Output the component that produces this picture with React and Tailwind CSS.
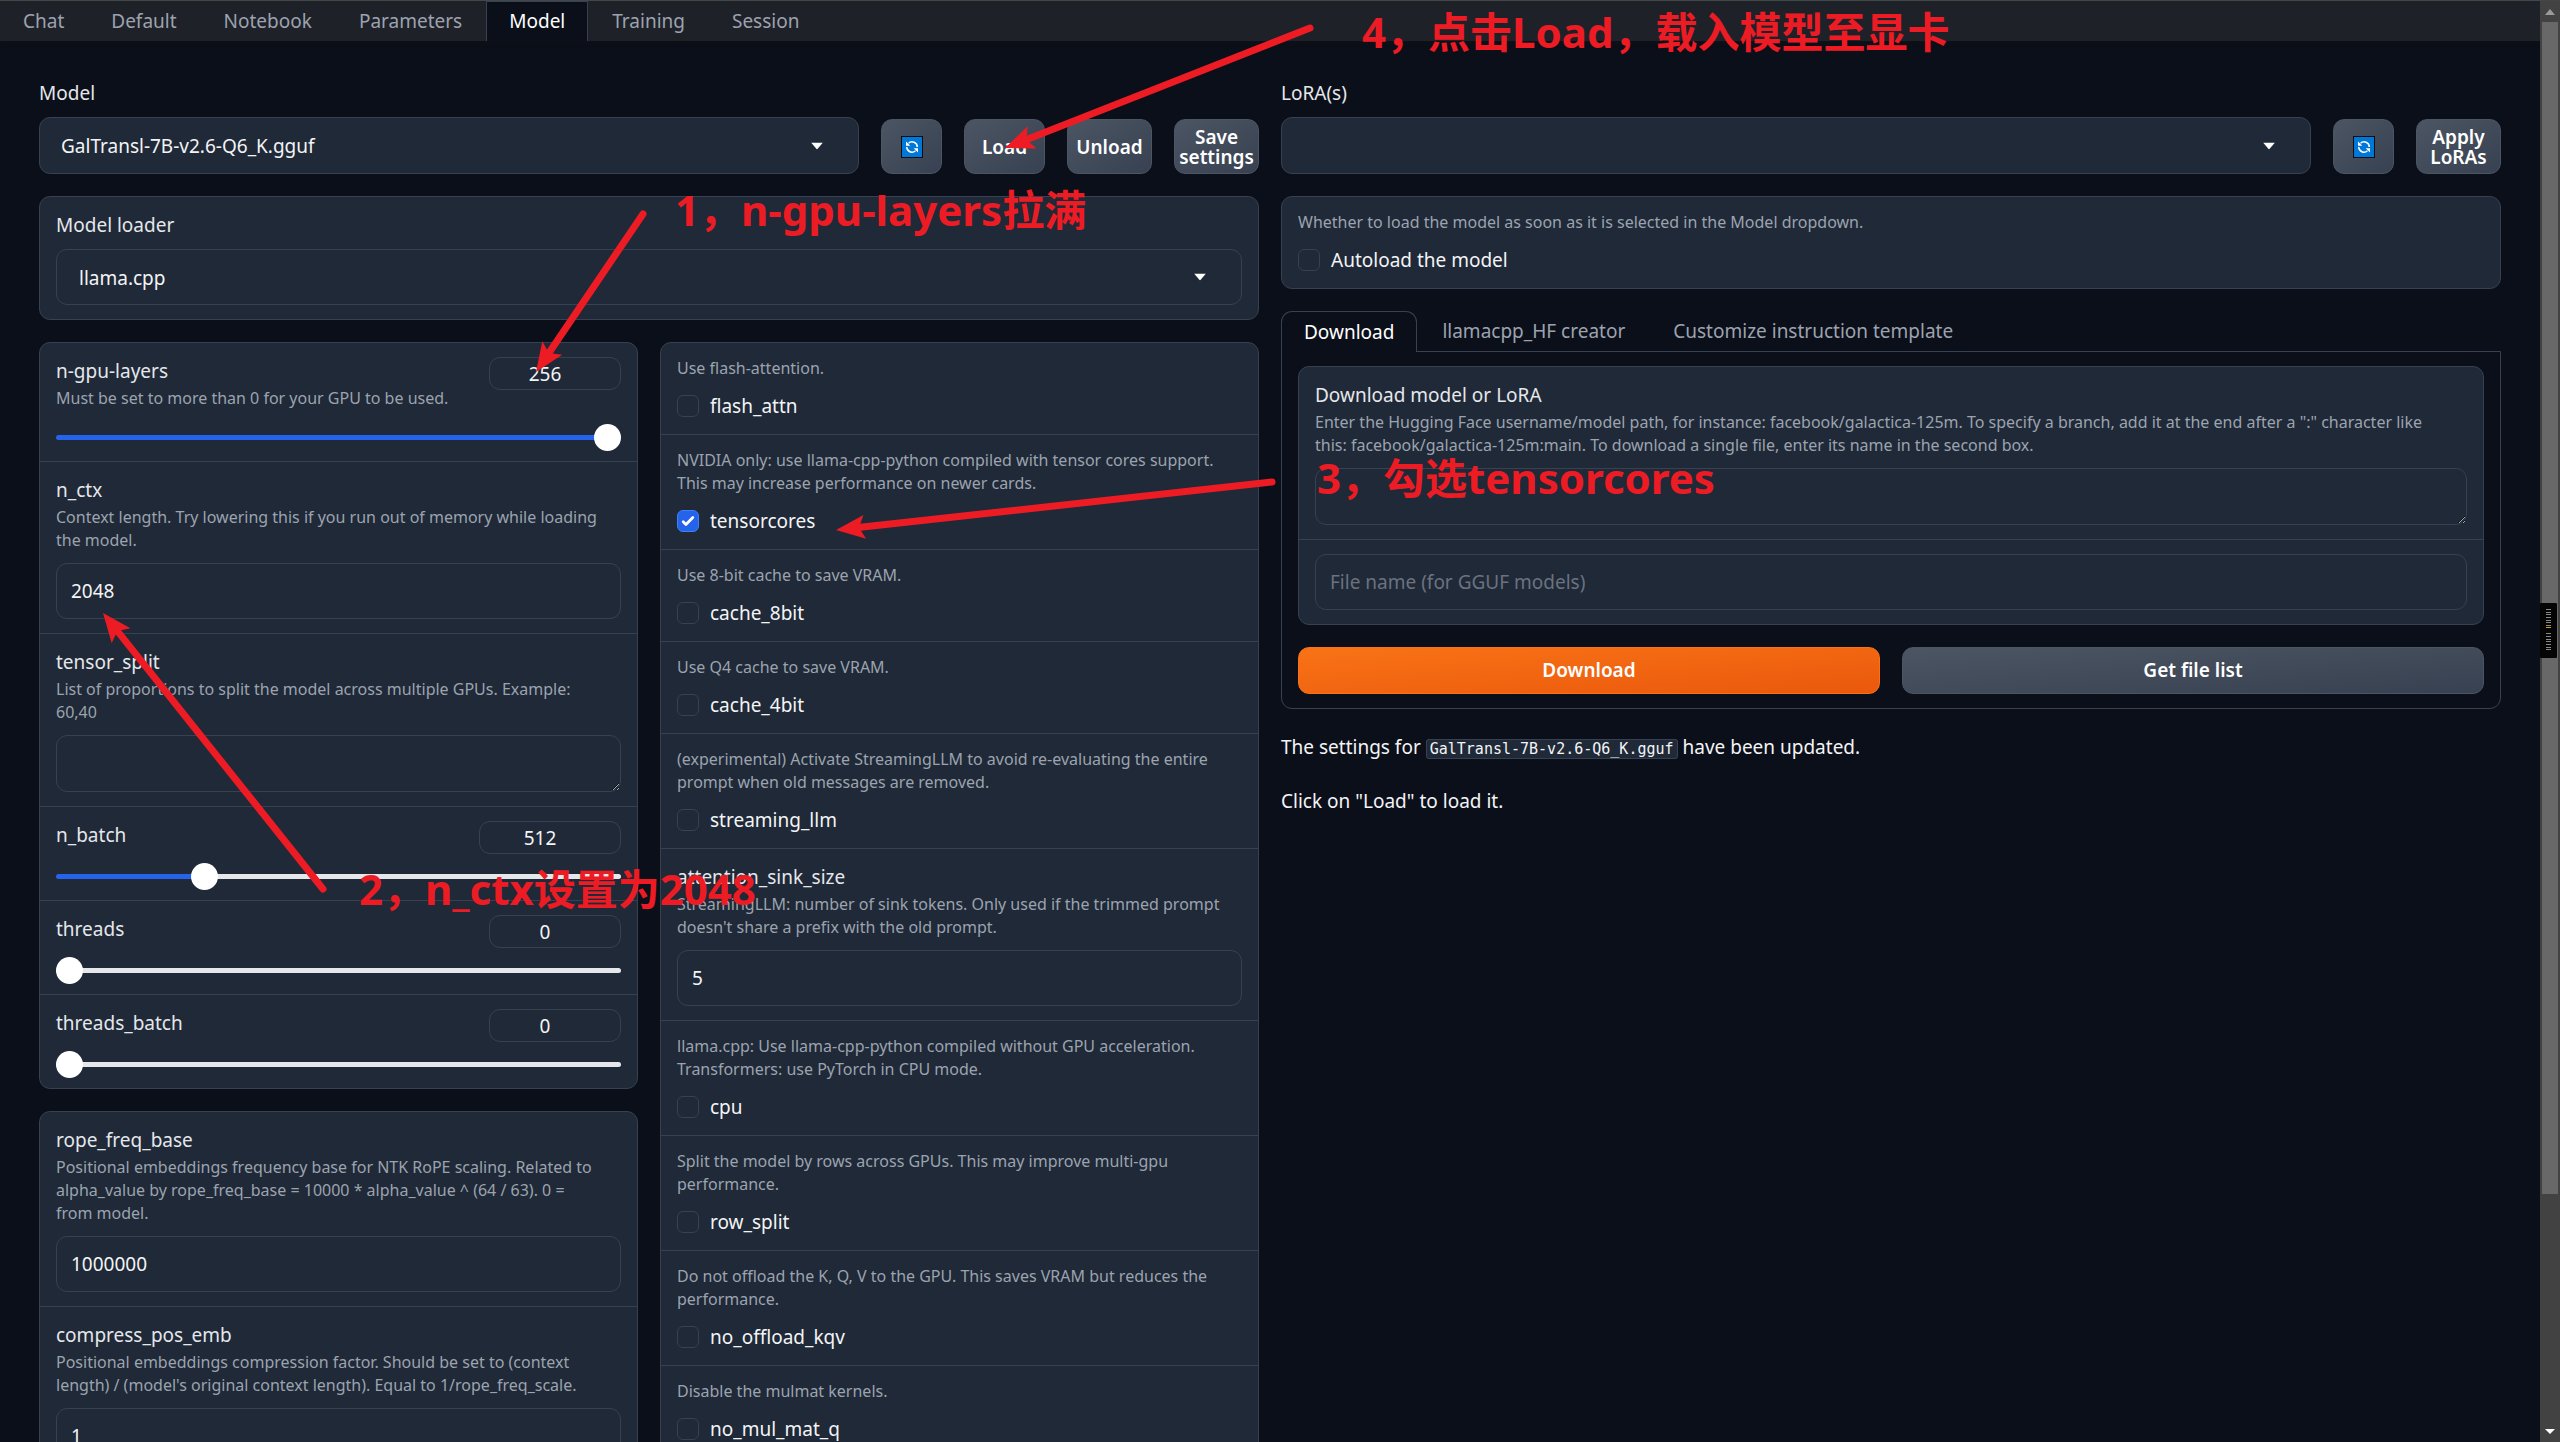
import React, { useState } from 'react';

const TABS = ['Chat', 'Default', 'Notebook', 'Parameters', 'Model', 'Training', 'Session'];
const DOWNLOAD_TABS = ['Download', 'llamacpp_HF creator', 'Customize instruction template'];

const RED = '#ed1c24';

// start -> tip, in page pixels
const ARROWS = [
  { from: [643, 213], to: [536, 371] },
  { from: [323, 888], to: [103, 612] },
  { from: [1272, 481], to: [836, 529] },
  { from: [1310, 27], to: [1005, 147] },
];

const Arrow = ({ from, to }) => {
  const dx = to[0] - from[0];
  const dy = to[1] - from[1];
  const len = Math.hypot(dx, dy);
  const angle = (Math.atan2(dy, dx) * 180) / Math.PI;
  return (
    <g transform={`translate(${from[0]} ${from[1]}) rotate(${angle})`}>
      <line x1="0" y1="0" x2={len - 20} y2="0" stroke={RED} strokeWidth="7" strokeLinecap="round" />
      <path d={`M${len} 0 L${len - 29} -12 L${len - 23} 0 L${len - 29} 12 Z`} fill={RED} />
    </g>
  );
};

const Group = ({ children }) => (
  <div className="flex flex-col divide-y divide-[#374151] rounded-[11px] border border-[#374151] bg-[#1f2937] overflow-hidden">
    {children}
  </div>
);

const Info = ({ children }) => (
  <span className="block whitespace-pre-line text-[16px] leading-[23px] text-[#9ca3af]">{children}</span>
);

const Label = ({ htmlFor, children }) => (
  <label htmlFor={htmlFor} className="block text-[19px] leading-7 text-[#e5e7eb]">{children}</label>
);

const Dropdown = ({ id, label, options, flat }) => (
  <div className="flex-1 min-w-0">
    <Label htmlFor={id}>{label}</Label>
    <div className="relative mt-[10px]">
      <select
        id={id}
        className={
          flat
            ? 'block w-full h-[57px] appearance-none rounded-[11px] border border-[#374151] bg-[#1f2937] pt-0.5 pl-[21px] pr-14 text-[19px] text-[#f3f4f6]'
            : 'block w-full h-14 appearance-none rounded-[11px] border border-[#374151] bg-[#1f2937] pt-0.5 pl-[22px] pr-14 text-[19px] text-[#f3f4f6]'
        }
      >
        {options.map((o) => <option key={o}>{o}</option>)}
      </select>
      <svg className="pointer-events-none absolute right-9 top-1/2 -translate-y-1/2" width="12" height="7" viewBox="0 0 12 7">
        <path d="M0 0h12L6 7z" fill="#fff" />
      </svg>
    </div>
  </div>
);

const CheckRow = ({ id, info, defaultChecked }) => {
  const [checked, setChecked] = useState(!!defaultChecked);
  return (
    <div className="px-4 py-[14px]">
      <Info>{info}</Info>
      <label className="mt-3 flex h-7 items-center gap-[11px] text-[19px] leading-7 text-[#f3f4f6]">
        <span className="relative flex">
          <input
            type="checkbox"
            checked={checked}
            onChange={(e) => setChecked(e.target.checked)}
            className="size-[22px] appearance-none rounded-md border border-[#374151] bg-[#1f2937] checked:border-[#3b82f6] checked:bg-[#2563eb]"
          />
          {checked && (
            <svg className="pointer-events-none absolute inset-0" width="22" height="22" viewBox="0 0 16 16" fill="#fff">
              <path d="M12.207 4.793a1 1 0 010 1.414l-5 5a1 1 0 01-1.414 0l-2-2a1 1 0 011.414-1.414L6.5 9.086l4.293-4.293a1 1 0 011.414 0z" />
            </svg>
          )}
        </span>
        {id}
      </label>
    </div>
  );
};

const TextRow = ({ id, label, info, value, multiline, placeholder }) => (
  <div className="px-4 py-[14px]">
    {label && <Label htmlFor={id}>{label}</Label>}
    {info && <div className="mt-0.5 mb-[11px]"><Info>{info}</Info></div>}
    {multiline ? (
      <textarea id={id} defaultValue={value} className="block w-full h-[57px] resize rounded-[11px] border border-[#374151] bg-[#1f2937] px-[14px] py-3 text-[19px] text-[#f3f4f6]" />
    ) : (
      <input
        id={id}
        type="text"
        aria-label={label || placeholder}
        defaultValue={value}
        placeholder={placeholder}
        className="block w-full h-14 rounded-[11px] border border-[#374151] bg-[#1f2937] px-[14px] text-[19px] text-[#f3f4f6] placeholder:text-[#6b7280]"
      />
    )}
  </div>
);

const SliderRow = ({ id, info, initial, max, wide }) => {
  const [value, setValue] = useState(initial);
  return (
    <div className="px-4 pt-[14px] pb-[10px]">
      <div className="flex items-start justify-between">
        <div>
          <Label htmlFor={id}>{id}</Label>
          {info && <div className="mt-0.5 mb-[5px]"><Info>{info}</Info></div>}
        </div>
        <input
          type="text"
          aria-label={`${id} value`}
          value={value}
          onChange={(e) => setValue(Number(e.target.value) || 0)}
          className={
            wide
              ? 'w-[142px] h-[33px] rounded-[11px] border border-[#374151] bg-[#1f2937] pr-5 text-center text-[19px] text-[#f3f4f6]'
              : 'w-[132px] h-[33px] rounded-[11px] border border-[#374151] bg-[#1f2937] pr-5 text-center text-[19px] text-[#f3f4f6]'
          }
        />
      </div>
      <input
        id={id}
        type="range"
        min="0"
        max={max}
        value={value}
        onChange={(e) => setValue(Number(e.target.value))}
        style={{ '--fill': `${(value / max) * 100}%` }}
        className="mt-[9px] block h-[27px] w-full appearance-none bg-transparent [&::-webkit-slider-runnable-track]:h-[5px] [&::-webkit-slider-runnable-track]:rounded-full [&::-webkit-slider-runnable-track]:[background:linear-gradient(to_right,#2563eb_var(--fill),#e5e7eb_var(--fill))] [&::-webkit-slider-thumb]:-mt-[11px] [&::-webkit-slider-thumb]:size-[27px] [&::-webkit-slider-thumb]:appearance-none [&::-webkit-slider-thumb]:rounded-full [&::-webkit-slider-thumb]:bg-white"
      />
    </div>
  );
};

const RefreshIcon = () => (
  <svg width="22" height="22" viewBox="0 0 22 22">
    <rect width="22" height="22" fill="#0a0d14" />
    <rect x="1" y="1" width="20" height="20" fill="#0078d7" />
    <g fill="none" stroke="#fff" strokeWidth="1.5">
      <path d="M7.500 7.200A5.300 5.300 0 0 1 16.300 11" />
      <path d="M14.500 14.800A5.300 5.300 0 0 1 5.700 11" />
    </g>
    <path d="M5 5.500v4.300h4.300zM17 16.500v-4.300h-4.300z" fill="#fff" />
  </svg>
);

const ToolButton = ({ size, children, ...rest }) => (
  <button
    {...rest}
    className={`${size} flex h-[55px] shrink-0 items-center justify-center rounded-[11px] border border-[#4b5563] bg-linear-to-br from-[#4b5563] to-[#374151] text-center text-[19px] leading-5 font-semibold text-white`}
  >
    {children}
  </button>
);

const Note = ({ className, children }) => (
  <p className={`absolute whitespace-nowrap text-[42px] leading-[54px] font-bold text-[#ed1c24] ${className}`}>{children}</p>
);

// small level meter docked on the window edge
const METER_TICKS = [6, 9, 11, 14, 17, 19, 22, 30, 33, 36, 38, 41, 44, 46];

const LevelMeter = () => (
  <svg className="absolute right-[3px] top-[602px]" width="17" height="55" viewBox="0 0 17 55">
    <rect width="17" height="55" rx="1" fill="#050505" />
    {METER_TICKS.map((y) => <rect key={y} x="6" y={y} width="5" height="1" fill="#8a8a8a" />)}
    <rect x="6" y="24" width="5" height="1" fill="#d99a1c" />
  </svg>
);

const App = () => {
  return (
    <div className="relative flex h-screen overflow-hidden border-t border-[#424845] bg-[#0b0f19] font-['Noto_Sans','Noto_Sans_CJK_SC',sans-serif] text-[#f3f4f6]">
      <div className="flex min-w-0 flex-1 flex-col">
        <nav className="flex h-10 shrink-0 gap-px bg-[#1f2129] shadow-[0_0_5px_1px_#111215]">
          {TABS.map((t) => (
            <button
              key={t}
              className={
                t === 'Model'
                  ? 'border border-b-0 border-[#374151] bg-[#0b0f19] px-[22px] text-[19px] text-white'
                  : 'border border-transparent px-[22px] text-[19px] text-[#9ca3af]'
              }
            >
              {t}
            </button>
          ))}
        </nav>

        <main className="grid min-h-0 flex-1 grid-cols-2 items-start gap-[22px] px-[39px] pt-[38px]">
          <section className="flex flex-col gap-[22px]">
            <div className="flex items-end gap-[22px]">
              <Dropdown flat id="model" label="Model" options={['GalTransl-7B-v2.6-Q6_K.gguf']} />
              <ToolButton size="w-[61px]" aria-label="Refresh models"><RefreshIcon /></ToolButton>
              <ToolButton size="w-[81px]">Load</ToolButton>
              <ToolButton size="w-[85px]">Unload</ToolButton>
              <ToolButton size="w-[85px]">Save settings</ToolButton>
            </div>

            <Group>
              <div className="px-4 py-[14px]">
                <Dropdown id="loader" label="Model loader" options={['llama.cpp']} />
              </div>
            </Group>

            <div className="grid grid-cols-2 items-start gap-[22px]">
              <div className="flex flex-col gap-[22px]">
                <Group>
                  <SliderRow id="n-gpu-layers" info="Must be set to more than 0 for your GPU to be used." initial={256} max={256} />
                  <TextRow id="n_ctx" label="n_ctx" info={'Context length. Try lowering this if you run out of memory while loading\nthe model.'} value="2048" />
                  <TextRow id="tensor_split" label="tensor_split" info={'List of proportions to split the model across multiple GPUs. Example:\n60,40'} multiline />
                  <SliderRow id="n_batch" initial={512} max={2048} wide />
                  <SliderRow id="threads" initial={0} max={256} />
                  <SliderRow id="threads_batch" initial={0} max={256} />
                </Group>
                <Group>
                  <TextRow
                    id="rope_freq_base"
                    label="rope_freq_base"
                    info={'Positional embeddings frequency base for NTK RoPE scaling. Related to\nalpha_value by rope_freq_base = 10000 * alpha_value ^ (64 / 63). 0 =\nfrom model.'}
                    value="1000000"
                  />
                  <TextRow
                    id="compress_pos_emb"
                    label="compress_pos_emb"
                    info={"Positional embeddings compression factor. Should be set to (context\nlength) / (model's original context length). Equal to 1/rope_freq_scale."}
                    value="1"
                  />
                </Group>
              </div>

              <Group>
                <CheckRow id="flash_attn" info="Use flash-attention." />
                <CheckRow id="tensorcores" info={'NVIDIA only: use llama-cpp-python compiled with tensor cores support.\nThis may increase performance on newer cards.'} defaultChecked />
                <CheckRow id="cache_8bit" info="Use 8-bit cache to save VRAM." />
                <CheckRow id="cache_4bit" info="Use Q4 cache to save VRAM." />
                <CheckRow id="streaming_llm" info={'(experimental) Activate StreamingLLM to avoid re-evaluating the entire\nprompt when old messages are removed.'} />
                <TextRow id="attention_sink_size" label="attention_sink_size" info={"StreamingLLM: number of sink tokens. Only used if the trimmed prompt\ndoesn't share a prefix with the old prompt."} value="5" />
                <CheckRow id="cpu" info={'llama.cpp: Use llama-cpp-python compiled without GPU acceleration.\nTransformers: use PyTorch in CPU mode.'} />
                <CheckRow id="row_split" info={'Split the model by rows across GPUs. This may improve multi-gpu\nperformance.'} />
                <CheckRow id="no_offload_kqv" info={'Do not offload the K, Q, V to the GPU. This saves VRAM but reduces the\nperformance.'} />
                <CheckRow id="no_mul_mat_q" info="Disable the mulmat kernels." />
              </Group>
            </div>
          </section>

          <section className="flex flex-col gap-[22px]">
            <div className="flex items-end gap-[22px]">
              <Dropdown flat id="lora" label="LoRA(s)" options={['']} />
              <ToolButton size="w-[61px]" aria-label="Refresh LoRAs"><RefreshIcon /></ToolButton>
              <ToolButton size="w-[85px]">Apply LoRAs</ToolButton>
            </div>

            <Group>
              <CheckRow id="Autoload the model" info="Whether to load the model as soon as it is selected in the Model dropdown." />
            </Group>

            <div>
              <div className="flex h-10 gap-0.5">
                {DOWNLOAD_TABS.map((t, i) => (
                  <button
                    key={t}
                    className={
                      i === 0
                        ? 'relative -mb-px rounded-t-[11px] border border-b-0 border-[#374151] bg-[#0b0f19] px-[22px] text-[19px] text-white'
                        : 'border border-transparent px-[22px] text-[19px] text-[#9ca3af]'
                    }
                  >
                    {t}
                  </button>
                ))}
              </div>
              <div className="flex flex-col gap-[22px] rounded-b-[11px] border border-[#374151] px-4 py-[14px]">
                <Group>
                  <TextRow
                    id="download_model"
                    label="Download model or LoRA"
                    info={'Enter the Hugging Face username/model path, for instance: facebook/galactica-125m. To specify a branch, add it at the end after a ":" character like\nthis: facebook/galactica-125m:main. To download a single file, enter its name in the second box.'}
                    multiline
                  />
                  <TextRow id="file_name" placeholder="File name (for GGUF models)" />
                </Group>
                <div className="grid grid-cols-2 gap-[22px]">
                  <button className="h-[47px] rounded-[11px] border border-[#f97316] bg-linear-to-br from-[#f97316] to-[#ea580c] text-[19px] font-semibold text-white">Download</button>
                  <button className="h-[47px] rounded-[11px] border border-[#4b5563] bg-linear-to-br from-[#4b5563] to-[#374151] text-[19px] font-semibold text-white">Get file list</button>
                </div>
              </div>
            </div>

            <div className="flex flex-col gap-6 pt-0.5 text-[19px] leading-7">
              <p>
                The settings for{' '}
                <code className="rounded-[3px] border border-[#374151] bg-[#1f2937] px-[3px] font-['DejaVu_Sans_Mono',monospace] text-[15px]">GalTransl-7B-v2.6-Q6_K.gguf</code>{' '}
                have been updated.
              </p>
              <p>Click on "Load" to load it.</p>
            </div>
          </section>
        </main>
      </div>

      {/* page scrollbar */}
      <div className="flex w-5 shrink-0 flex-col items-center bg-[#424242]">
        <svg className="shrink-0" width="20" height="21" viewBox="0 0 20 21"><path d="M5 14h10l-5-6z" fill="#9a9a9a" /></svg>
        <div className="w-4 flex-[293] bg-[#686868]" />
        <div className="flex-[57]" />
        <svg className="shrink-0" width="20" height="20" viewBox="0 0 20 20"><path d="M5 7h10l-5 5z" fill="#fff" /></svg>
      </div>
      <LevelMeter />

      {/* tutorial marks drawn over the page */}
      <svg className="pointer-events-none absolute inset-0 size-full">
        {ARROWS.map((a, i) => <Arrow key={i} {...a} />)}
      </svg>
      <Note className="left-[675px] top-[182px]">1，n-gpu-layers拉满</Note>
      <Note className="left-[359px] top-[861px]">2，n_ctx设置为2048</Note>
      <Note className="left-[1317px] top-[450px]">3，勾选tensorcores</Note>
      <Note className="left-[1362px] top-[4px]">4，点击Load，载入模型至显卡</Note>
    </div>
  );
};

export default App;
